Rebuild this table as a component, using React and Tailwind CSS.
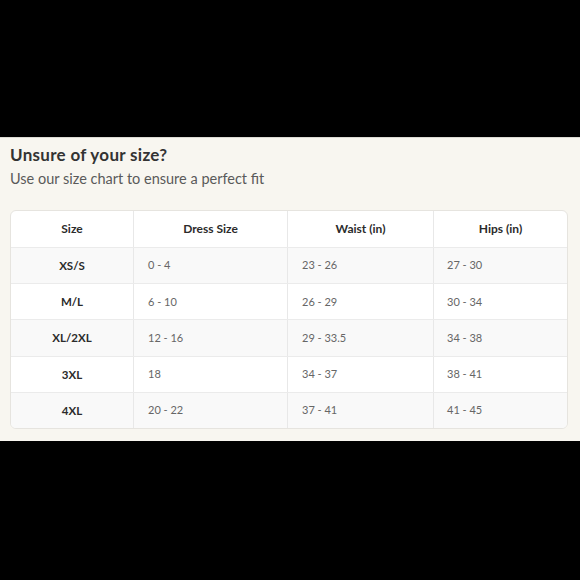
import React from "react";

const rows = [
  ["XS/S", "0 - 4", "23 - 26", "27 - 30"],
  ["M/L", "6 - 10", "26 - 29", "30 - 34"],
  ["XL/2XL", "12 - 16", "29 - 33.5", "34 - 38"],
  ["3XL", "18", "34 - 37", "38 - 41"],
  ["4XL", "20 - 22", "37 - 41", "41 - 45"],
];

export default function App() {
  return (
    <div className="w-[580px] h-[580px] bg-black flex flex-col" style={{ fontFamily: "Lato, 'Open Sans', sans-serif" }}>
      <div className="h-[137px]" />
      <div className="h-[304px] bg-[#f8f6f0] border-t border-[#dcdad4] px-[10px] pt-[6px]">
        <h1 className="text-[17px] leading-[22px] font-bold text-[#333333] tracking-[0.3px]">Unsure of your size?</h1>
        <p className="mt-[3px] text-[14.5px] leading-[20px] text-[#5a5a5a]">Use our size chart to ensure a perfect fit</p>
        <div className="mt-[21px] w-[558px] rounded-[6px] border border-[#e6e4df] bg-white overflow-hidden">
          <div className="grid grid-cols-[123px_154px_146px_1fr] h-[36px] items-center text-[12px] font-bold text-[#2b2b2b]">
            <div className="text-center h-full flex items-center justify-center border-r border-[#e8e8e8]">Size</div>
            <div className="text-center h-full flex items-center justify-center border-r border-[#e8e8e8]">Dress Size</div>
            <div className="text-center h-full flex items-center justify-center border-r border-[#e8e8e8]">Waist (in)</div>
            <div className="text-center h-full flex items-center justify-center">Hips (in)</div>
          </div>
          {rows.map((r, i) => (
            <div
              key={i}
              className={
                "grid grid-cols-[123px_154px_146px_1fr] h-[36.2px] border-t border-[#ebebeb] text-[11px] " +
                (i % 2 === 0 ? "bg-[#f9f9f9]" : "bg-white")
              }
            >
              <div className="flex items-center justify-center font-bold text-[11.5px] text-[#2b2b2b] border-r border-[#e8e8e8]">{r[0]}</div>
              <div className="flex items-center pl-[14px] text-[#666666] border-r border-[#e8e8e8]">{r[1]}</div>
              <div className="flex items-center pl-[14px] text-[#666666] border-r border-[#e8e8e8]">{r[2]}</div>
              <div className="flex items-center pl-[13px] text-[#666666]">{r[3]}</div>
            </div>
          ))}
        </div>
      </div>
    </div>
  );
}
